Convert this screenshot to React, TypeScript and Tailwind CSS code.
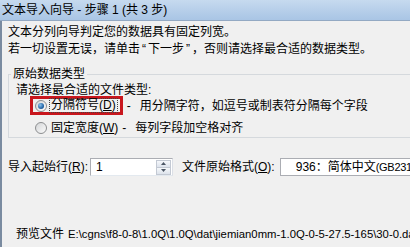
import React from "react";

const FONT = "font-['Liberation_Sans','Noto_Sans_CJK_SC',sans-serif]";

function Radio({ checked }: { checked?: boolean }) {
  return (
    <span className="flex h-[12px] w-[12px] shrink-0 items-center justify-center rounded-full border border-[#8c8e90] bg-gradient-to-br from-[#d4d6d8] to-[#fbfbfb]">
      {checked && (
        <span className="h-[6px] w-[6px] rounded-full bg-[radial-gradient(circle_at_35%_35%,#8cc4ee,#2466a8_60%,#123f73)]" />
      )}
    </span>
  );
}

function Key({ k }: { k: string }) {
  return (
    <>
      (<span className="underline underline-offset-1">{k}</span>)
    </>
  );
}

function Spinner() {
  return (
    <div className="ml-auto mr-[1px] flex h-[15px] w-[15px] shrink-0 flex-col border border-[#c3c9d3]">
      <div className="flex h-[7px] items-center justify-center border-b border-[#c3c9d3] bg-gradient-to-b from-[#f6f8fb] to-[#dde3ec]">
        <svg width="5" height="3" viewBox="0 0 5 3">
          <path d="M0 3 L2.5 0 L5 3 Z" fill="#4a5564" />
        </svg>
      </div>
      <div className="flex flex-1 items-center justify-center bg-gradient-to-b from-[#f6f8fb] to-[#dde3ec]">
        <svg width="5" height="3" viewBox="0 0 5 3">
          <path d="M0 0 L2.5 3 L5 0 Z" fill="#4a5564" />
        </svg>
      </div>
    </div>
  );
}

export default function App() {
  return (
    <div className={`h-[247px] w-[410px] overflow-hidden bg-[#f0f0f0] text-[12px] text-black ${FONT}`}>
      {/* title bar */}
      <div className="flex h-[21px] items-center border-b border-[#93a9c3] bg-gradient-to-b from-[#c6daef] via-[#b7cfea] to-[#a9c5e5] pl-[2px] leading-none">
        文本导入向导 - 步骤 1 (共 3 步)
      </div>

      <div className="h-[226px] border-l-2 border-[#7a8ba0] pl-[6px]">
        <p className="whitespace-nowrap pt-[3px] leading-[17px]">文本分列向导判定您的数据具有固定列宽。</p>
        <p className="whitespace-nowrap leading-[17px]">
          若一切设置无误，请单击<span className="mx-[2px]">“</span>下一步<span className="mx-[2px]">”</span>，否则请选择最合适的数据类型。
        </p>

        <fieldset className="mt-[8px] w-[420px] border border-[#d5d9dd] pb-0">
          <legend className="ml-[2px] px-[2px] leading-[17px]">原始数据类型</legend>
          <div className="pl-[7px]">
            <p className="leading-[14px]">请选择最合适的文件类型:</p>

            <div className="-mt-[1px] flex h-[19px] items-center whitespace-nowrap">
              <div className="ml-[14px] flex h-[19px] shrink-0 items-center border-[3px] border-[#c8161d] pr-[2px]">
                <span className="ml-[2px]">
                  <Radio checked />
                </span>
                <span className="ml-[2px] border border-dotted border-[#444] px-[1px] leading-[13px]">
                  分隔符号<Key k="D" />
                </span>
              </div>
              <span className="ml-[4px]">-</span>
              <span className="ml-[9px]">用分隔字符，如逗号或制表符分隔每个字段</span>
            </div>

            <div className="mt-[3px] flex h-[19px] items-center whitespace-nowrap">
              <span className="ml-[19px]">
                <Radio />
              </span>
              <span className="ml-[4px]">
                固定宽度<Key k="W" />
              </span>
              <span className="ml-[4px]">-</span>
              <span className="ml-[9px]">每列字段加空格对齐</span>
            </div>
          </div>
        </fieldset>

        <div className="mt-[20px] flex h-[18px] items-center whitespace-nowrap">
          <span className="w-[82px] shrink-0">
            导入起始行<Key k="R" />:
          </span>
          <div className="flex h-[18px] w-[83px] shrink-0 items-center border border-[#abadb3] border-b-[#e3e9ef] border-r-[#dbdfe6] bg-white pl-[5px]">
            <span>1</span>
            <Spinner />
          </div>
          <span className="ml-[9px] shrink-0">
            文件原始格式<Key k="O" />:
          </span>
          <div className="ml-[5px] flex h-[18px] w-[160px] shrink-0 items-center border border-[#abadb3] bg-white pl-[15px]">
            936：简体中文<span className="text-[11px] tracking-[-0.3px]">(GB2312)</span>
          </div>
        </div>

        <p className="ml-[8px] mt-[50px] flex items-center whitespace-nowrap leading-[16px]">
          <span className="shrink-0">预览文件</span>
          <span className="ml-[4px] shrink-0 text-[11.3px]">E:\cgns\f8-0-8\1.0Q\1.0Q\dat\jiemian0mm-1.0Q-0-5-27.5-165\30-0.dat</span>
        </p>
      </div>
    </div>
  );
}
